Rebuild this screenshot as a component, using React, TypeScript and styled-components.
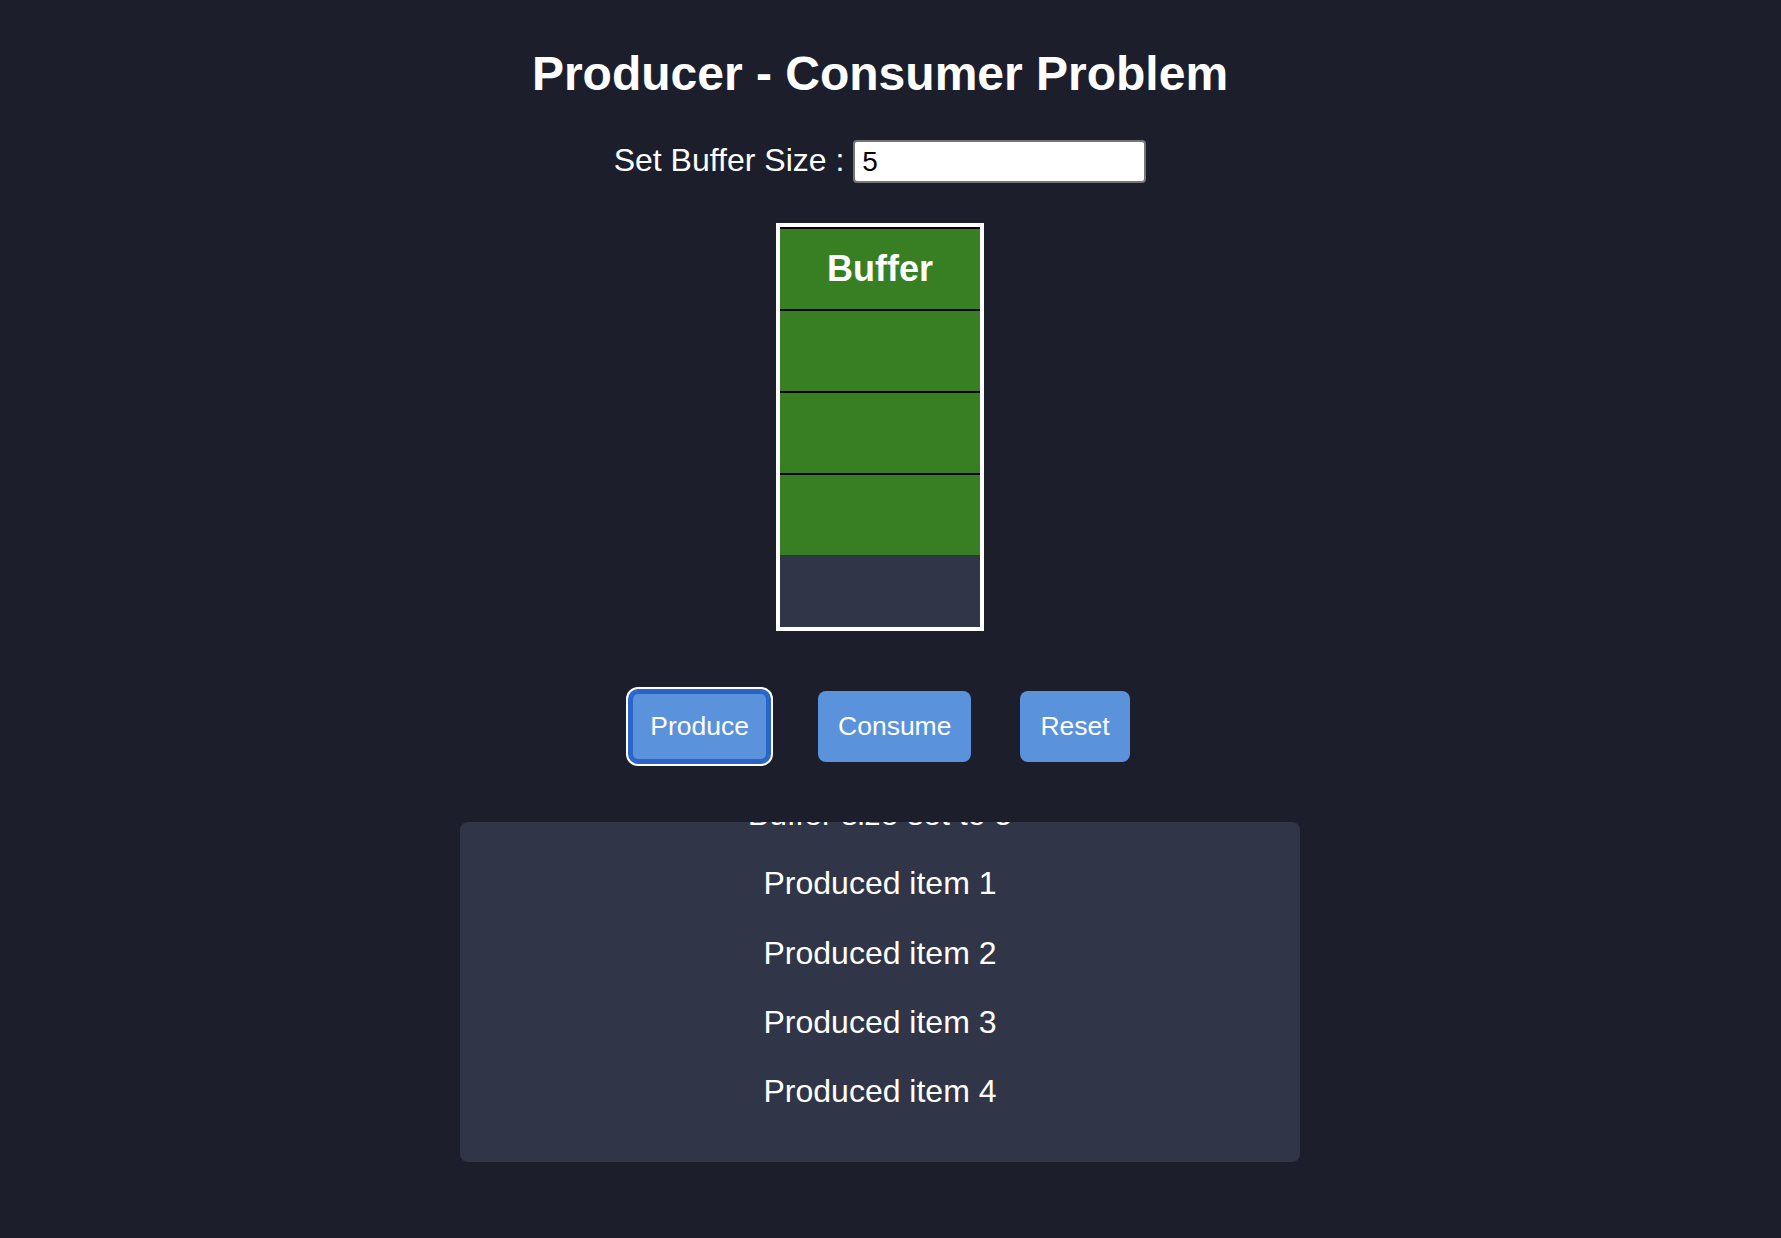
import React, { useLayoutEffect, useRef } from "react";
import styled, { createGlobalStyle, css } from "styled-components";

const GlobalStyle = createGlobalStyle`
  html, body {
    margin: 0;
    padding: 0;
    background: #1c1f2b;
  }
  body {
    font-family: "Liberation Sans", Arial, sans-serif;
    color: #ffffff;
  }
`;

const Page = styled.main`
  width: 1760px;
  min-height: 1238px;
  box-sizing: border-box;
  padding-top: 45px;
  display: flex;
  flex-direction: column;
  align-items: center;
`;

const Title = styled.h1`
  margin: 0;
  font-size: 48px;
  font-weight: 700;
  line-height: 57px;
  color: #ffffff;
`;

const SizeRow = styled.div`
  margin-top: 38px;
  display: flex;
  align-items: center;
  gap: 9px;
`;

const SizeLabel = styled.label`
  font-size: 32px;
  line-height: 36px;
  padding-bottom: 4px;
  color: #ffffff;
`;

const SizeInput = styled.input`
  box-sizing: border-box;
  width: 293px;
  height: 43px;
  padding: 0 7px;
  border: 2px solid #767676;
  border-radius: 4px;
  background: #ffffff;
  color: #000000;
  font-family: "Liberation Sans", Arial, sans-serif;
  font-size: 28px;
  outline: none;
`;

const BufferBox = styled.div`
  margin-top: 40px;
  width: 200px;
  height: 400px;
  border: 4px solid #ffffff;
  background: #303647;
  display: flex;
  flex-direction: column;
  overflow: hidden;
`;

const Slot = styled.div`
  flex: none;
  height: 80px;
  border-top: 2px solid #000000;
  background: #387e22;
  display: flex;
  justify-content: center;
  align-items: flex-start;
`;

const SlotCaption = styled.span`
  padding-top: 19px;
  font-size: 36px;
  font-weight: 700;
  line-height: normal;
  color: #ffffff;
`;

const ButtonRow = styled.div`
  margin-top: 60px;
  display: flex;
  gap: 49px;
`;

const ActionButton = styled.button<{ $focused?: boolean }>`
  height: 71px;
  padding: 0 20px;
  border: none;
  border-radius: 8px;
  background: #5b92dc;
  color: #ffffff;
  font-family: "Liberation Sans", Arial, sans-serif;
  font-size: 26.5px;
  line-height: 31px;
  cursor: pointer;
  ${(p) =>
    p.$focused &&
    css`
      box-shadow: inset 0 0 0 3px #2a64c8, 0 0 0 2px #2a64c8, 0 0 0 4px #ffffff;
    `}
`;

const LogBox = styled.div`
  margin-top: 60px;
  width: 840px;
  height: 340px;
  border-radius: 8px;
  background: #303647;
  overflow: hidden;
`;

const LogList = styled.div`
  padding: 53px 0;
  display: flex;
  flex-direction: column;
  align-items: center;
  gap: 33.3px;
`;

const LogEntry = styled.div`
  font-size: 32px;
  line-height: 36px;
  color: #ffffff;
  text-align: center;
`;

const bufferSize = 5;
const items = [1, 2, 3, 4];
const logs = [
  "Buffer size set to 5",
  "Produced item 1",
  "Produced item 2",
  "Produced item 3",
  "Produced item 4",
];

export default function App() {
  const logRef = useRef<HTMLDivElement>(null);

  useLayoutEffect(() => {
    if (logRef.current) {
      logRef.current.scrollTop = logRef.current.scrollHeight;
    }
  }, []);

  return (
    <>
      <GlobalStyle />
      <Page>
        <Title>Producer - Consumer Problem</Title>
        <SizeRow>
          <SizeLabel htmlFor="buffer-size">Set Buffer Size :</SizeLabel>
          <SizeInput id="buffer-size" type="text" defaultValue={String(bufferSize)} />
        </SizeRow>
        <BufferBox>
          {items.map((item, i) => (
            <Slot key={item}>{i === 0 && <SlotCaption>Buffer</SlotCaption>}</Slot>
          ))}
        </BufferBox>
        <ButtonRow>
          <ActionButton $focused>Produce</ActionButton>
          <ActionButton>Consume</ActionButton>
          <ActionButton>Reset</ActionButton>
        </ButtonRow>
        <LogBox ref={logRef}>
          <LogList>
            {logs.map((l) => (
              <LogEntry key={l}>{l}</LogEntry>
            ))}
          </LogList>
        </LogBox>
      </Page>
    </>
  );
}
